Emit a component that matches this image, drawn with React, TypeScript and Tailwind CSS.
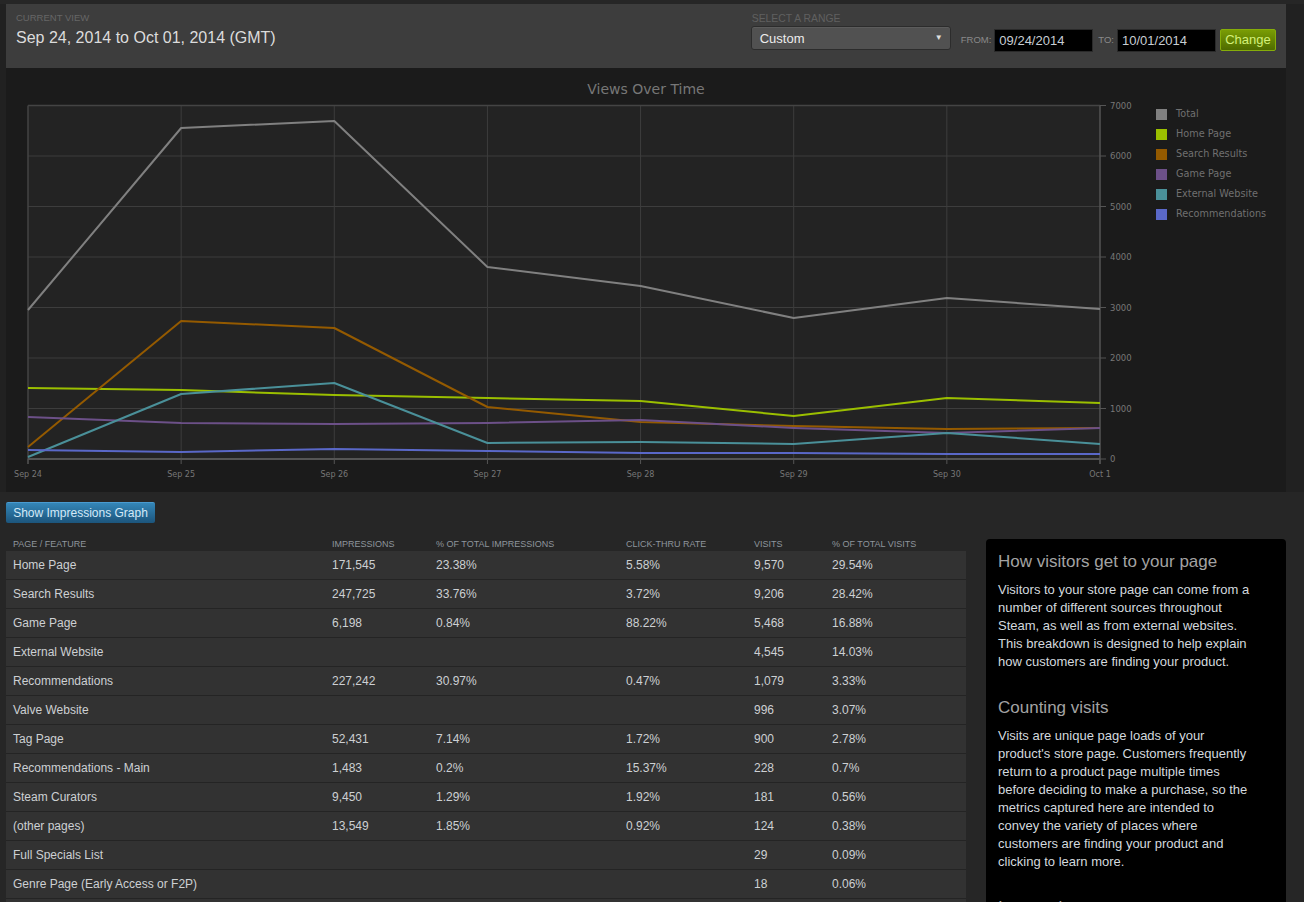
const DATES = ["Sep 24", "Sep 25", "Sep 26", "Sep 27", "Sep 28", "Sep 29", "Sep 30", "Oct 1"];

// y positions of each point, in page pixels (chart svg starts at page y 97)
const SERIES = [
  { name: "Total", color: "#808080", ys: [310, 128, 121, 267, 286, 318, 298, 309] },
  { name: "Home Page", color: "#9bbf00", ys: [388, 390, 395, 398, 401, 416, 398, 403] },
  { name: "Search Results", color: "#945a00", ys: [447, 321, 328, 407, 422, 426, 429, 428] },
  { name: "Game Page", color: "#6c5088", ys: [417, 423, 424, 423, 420, 428, 433, 428] },
  { name: "External Website", color: "#4a9099", ys: [457, 394, 383, 443, 442, 444, 433, 444] },
  { name: "Recommendations", color: "#5a68c8", ys: [450, 452, 449, 451, 453, 453, 454, 454] },
];

const ROWS = [
  ["Home Page", "171,545", "23.38%", "5.58%", "9,570", "29.54%"],
  ["Search Results", "247,725", "33.76%", "3.72%", "9,206", "28.42%"],
  ["Game Page", "6,198", "0.84%", "88.22%", "5,468", "16.88%"],
  ["External Website", "", "", "", "4,545", "14.03%"],
  ["Recommendations", "227,242", "30.97%", "0.47%", "1,079", "3.33%"],
  ["Valve Website", "", "", "", "996", "3.07%"],
  ["Tag Page", "52,431", "7.14%", "1.72%", "900", "2.78%"],
  ["Recommendations - Main", "1,483", "0.2%", "15.37%", "228", "0.7%"],
  ["Steam Curators", "9,450", "1.29%", "1.92%", "181", "0.56%"],
  ["(other pages)", "13,549", "1.85%", "0.92%", "124", "0.38%"],
  ["Full Specials List", "", "", "", "29", "0.09%"],
  ["Genre Page (Early Access or F2P)", "", "", "", "18", "0.06%"],
];

const X0 = 22;
const X1 = 1094;
const TOP = 8.5;
const BOT = 362;
const xAt = (i: number) => X0 + (i * (X1 - X0)) / 7;
const yAt = (v: number) => BOT - (v / 7000) * (BOT - TOP);

function Chart() {
  const ticks = [0, 1000, 2000, 3000, 4000, 5000, 6000, 7000];
  return (
    <svg width={1140} height={395} className="block shrink-0" fontFamily="'DejaVu Sans', Verdana, sans-serif">
      <rect x={X0} y={TOP} width={X1 - X0} height={BOT - TOP} fill="#232323" />
      {ticks.slice(1, 7).map((v) => (
        <line key={v} x1={X0} x2={X1} y1={yAt(v)} y2={yAt(v)} stroke="#3d3d3d" strokeWidth={1} />
      ))}
      {DATES.slice(1, 7).map((_, k) => (
        <line key={k} x1={xAt(k + 1)} x2={xAt(k + 1)} y1={TOP} y2={BOT} stroke="#3d3d3d" strokeWidth={1} />
      ))}
      <line x1={X0} x2={X1} y1={TOP} y2={TOP} stroke="#444" strokeWidth={1.5} />
      <line x1={X0} x2={X0} y1={TOP} y2={BOT + 5} stroke="#444" strokeWidth={1.5} />
      <line x1={X1} x2={X1} y1={TOP} y2={BOT + 5} stroke="#555" strokeWidth={1.5} />
      <line x1={X0} x2={X1} y1={BOT} y2={BOT} stroke="#555" strokeWidth={2} />
      {ticks.map((v) => (
        <g key={v}>
          <line x1={X1} x2={X1 + 6} y1={yAt(v)} y2={yAt(v)} stroke="#555" strokeWidth={1} />
          <text x={X1 + 10} y={yAt(v) + 3} fontSize={8.5} fill="#777">
            {v}
          </text>
        </g>
      ))}
      {DATES.map((d, i) => (
        <g key={d}>
          <line x1={xAt(i)} x2={xAt(i)} y1={BOT} y2={BOT + 5} stroke="#555" strokeWidth={1} />
          <text x={xAt(i)} y={380} fontSize={8} fill="#777" textAnchor="middle">
            {d}
          </text>
        </g>
      ))}
      {SERIES.map((s) => (
        <polyline
          key={s.name}
          points={s.ys.map((y, i) => `${xAt(i)},${y - 97}`).join(" ")}
          fill="none"
          stroke={s.color}
          strokeWidth={2}
          strokeLinejoin="round"
        />
      ))}
    </svg>
  );
}

function Header() {
  return (
    <div className="ml-[6px] mt-[4px] w-[1280px] h-[64px] bg-[#3d3d3d] flex justify-between">
      <div className="pl-[10px] pt-[8px]">
        <div className="text-[9.5px] leading-[11px] text-[#666] uppercase">Current View</div>
        <div className="text-[16px] leading-[20px] text-[#dcdcdc] mt-[5px]">Sep 24, 2014 to Oct 01, 2014 (GMT)</div>
      </div>
      <div className="flex items-start pr-[10px]">
        <div className="w-[200px] pt-[10px]">
          <div className="text-[10.4px] leading-[10px] text-[#606060] uppercase pl-[1px]">Select a Range</div>
          <div className="mt-[2px] h-[24px] bg-[#515151] border border-[#2c2c2c] rounded-[3px] flex items-center justify-between pl-[8px] pr-[7px] shadow-[inset_0_1px_0_#5c5c5c]">
            <span className="text-[13px] text-[#ececec] pt-[1px]">Custom</span>
            <span className="text-[8px] text-[#e0e0e0]">▼</span>
          </div>
        </div>
        <div className="flex items-center mt-[25px] ml-[10px]">
          <span className="text-[9.5px] text-[#8a8a8a] uppercase mr-[3px]">From:</span>
          <div className="w-[99px] h-[23px] bg-black border border-[#2a2a2a] flex items-center pl-[4px] text-[13px] text-[#c8ced4]">09/24/2014</div>
          <span className="text-[9.5px] text-[#8a8a8a] uppercase ml-[5px] mr-[3px]">To:</span>
          <div className="w-[99px] h-[23px] bg-black border border-[#2a2a2a] flex items-center pl-[4px] text-[13px] text-[#c8ced4]">10/01/2014</div>
          <div className="ml-[4px] -mt-[2px] w-[56px] h-[22px] rounded-[2px] border border-[#86ad0a] bg-gradient-to-b from-[#7a9d05] to-[#4f6b00] flex items-center justify-center text-[13px] text-[#d4f07a]">
            Change
          </div>
        </div>
      </div>
    </div>
  );
}

function ChartPanel() {
  return (
    <div className="ml-[6px] w-[1280px] h-[424px] bg-[#1b1b1b] flex flex-col">
      <div className="pt-[13px] h-[29px] text-center text-[14px] leading-[16px] text-[#777] font-['DejaVu_Sans',Verdana,sans-serif]">
        Views Over Time
      </div>
      <div className="flex">
        <Chart />
        <div className="ml-[10px] mt-[7px] flex flex-col font-['DejaVu_Sans',Verdana,sans-serif]">
          {SERIES.map((s) => (
            <div key={s.name} className="h-[20px] flex items-center gap-[9px]">
              <div className="w-[11px] h-[11px]" style={{ backgroundColor: s.color }} />
              <span className="text-[9.7px] text-[#707070]">{s.name}</span>
            </div>
          ))}
        </div>
      </div>
    </div>
  );
}

function Table() {
  const cols = "grid grid-cols-[319px_104px_190px_128px_78px_1fr] pl-[7px]";
  return (
    <div className="w-[960px] shrink-0">
      <div className={`${cols} h-[15px] pt-[3px] text-[9px] leading-[10px] text-[#8e959c] uppercase`}>
        <span>Page / Feature</span>
        <span>Impressions</span>
        <span>% of Total Impressions</span>
        <span>Click-Thru Rate</span>
        <span>Visits</span>
        <span>% of Total Visits</span>
      </div>
      {ROWS.map((r) => (
        <div key={r[0]} className={`${cols} h-[29px] items-center bg-[#323232] border-b border-[#242424] text-[12px] text-[#cdd0d3]`}>
          {r.map((c, i) => (
            <span key={i}>{c}</span>
          ))}
        </div>
      ))}
      <div className="h-[29px] bg-[#323232]" />
    </div>
  );
}

function HelpPanel() {
  return (
    <div className="ml-[20px] mt-[3px] w-[300px] bg-black rounded-t-[4px] pl-[12px] pr-[33px] pt-[13px] pb-[20px]">
      <h3 className="text-[17px] leading-[20px] text-[#a3a3a3]">How visitors get to your page</h3>
      <p className="mt-[9px] text-[13px] leading-[18px] text-[#d3d9de]">
        Visitors to your store page can come from a number of different sources throughout Steam, as well as from external
        websites. This breakdown is designed to help explain how customers are finding your product.
      </p>
      <h3 className="mt-[27px] text-[17px] leading-[20px] text-[#a3a3a3]">Counting visits</h3>
      <p className="mt-[9px] text-[13px] leading-[18px] text-[#d3d9de]">
        Visits are unique page loads of your product's store page. Customers frequently return to a product page multiple
        times before deciding to make a purchase, so the metrics captured here are intended to convey the variety of places
        where customers are finding your product and clicking to learn more.
      </p>
      <h3 className="mt-[27px] text-[17px] leading-[20px] text-[#a3a3a3]">Impressions</h3>
    </div>
  );
}

export default function App() {
  return (
    <div className="w-[1304px] h-[902px] overflow-hidden bg-[#262626] font-['Liberation_Sans',Arial,sans-serif]">
      <div className="bg-[#212121]">
        <Header />
        <ChartPanel />
      </div>
      <div className="px-[6px] pt-[10px]">
        <div className="w-[149px] h-[21px] rounded-[2px] bg-gradient-to-b from-[#3486b8] to-[#1c557c] border-t border-[#4a9bd0] flex items-center justify-center text-[12px] text-[#d4e9f7]">
          Show Impressions Graph
        </div>
        <div className="flex items-start mt-[13px]">
          <Table />
          <HelpPanel />
        </div>
      </div>
    </div>
  );
}
